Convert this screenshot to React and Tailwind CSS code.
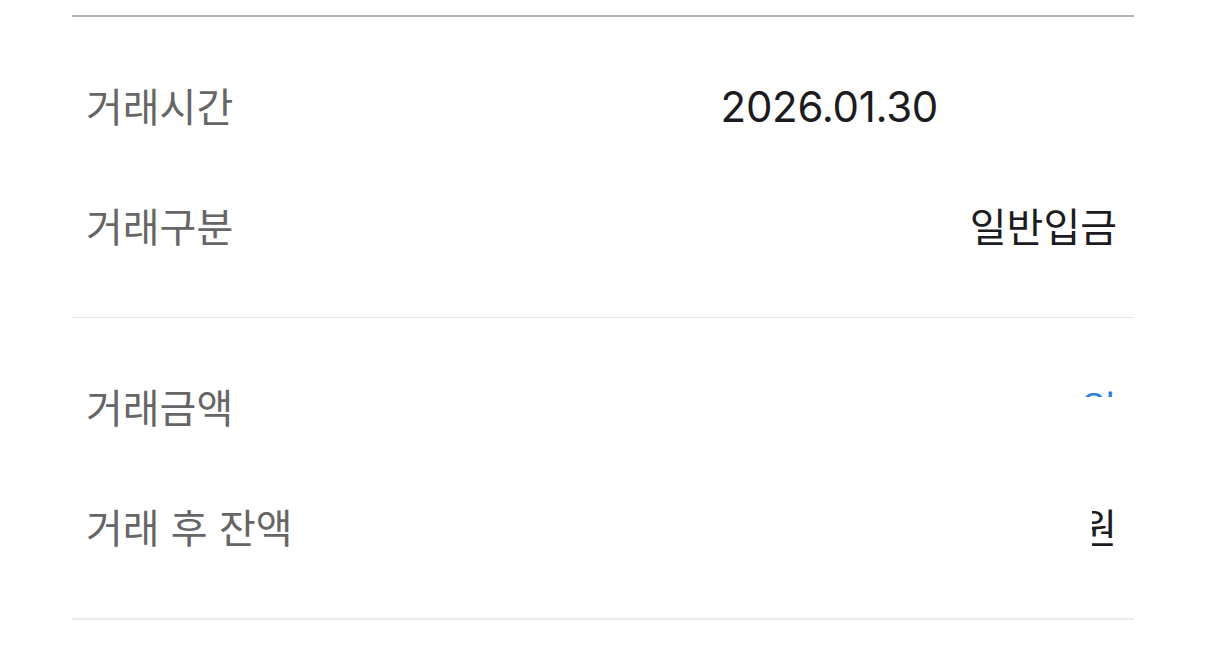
import React from 'react';

const FONT = "font-['Inter','Noto_Sans_CJK_KR',sans-serif]";

const Row = ({ label, children }) => (
    <div className="h-[120px] flex items-center justify-between pl-[14px] pr-[17px]">
        <span className="text-[40px] leading-[48px] text-[#666666] mt-[2px]">{label}</span>
        <div className="flex items-center">{children}</div>
    </div>
);

const App = () => {
    return (
        <div className={`w-[1206px] h-[657px] bg-white overflow-hidden ${FONT}`}>
            <div className="mx-[72px] pt-[15px]">
                <div className="h-[2px] bg-[#b1b1b6]" />

                <div className="py-[30px]">
                    <Row label="거래시간">
                        <span className="text-[42px] leading-[48px] text-[#1c1c1e] tracking-[-0.3px]">2026.01.30</span>
                        <span className="w-[179px]" />
                    </Row>
                    <Row label="거래구분">
                        <span className="text-[40px] leading-[48px] text-[#1c1c1e] mt-[2px]">일반입금</span>
                    </Row>
                </div>

                <div className="h-px bg-[#e6e6e6]" />

                <div className="py-[30px]">
                    <Row label="거래금액">
                        <div className="h-[10px] overflow-hidden self-start mt-[-21px]">
                            <span className="block text-[40px] leading-[48px] text-[#2f7fd6]">원</span>
                        </div>
                    </Row>
                    <Row label="거래 후 잔액">
                        <div className="w-[25px] overflow-hidden flex justify-end mt-[2px]">
                            <span className="text-[40px] leading-[48px] text-[#1c1c1e]">원</span>
                        </div>
                    </Row>
                </div>

                <div className="h-[2px] bg-[#ebebeb]" />
            </div>
        </div>
    );
};

export default App;
